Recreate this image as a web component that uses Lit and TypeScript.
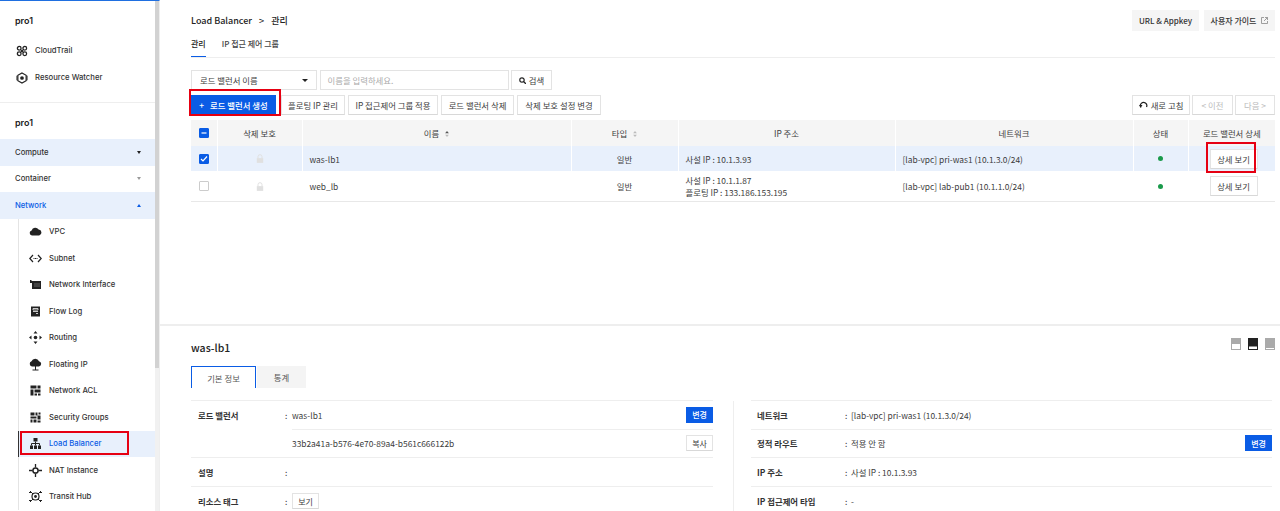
import { LitElement, css, html, svg } from 'lit';
import { customElement } from 'lit/decorators.js';

const ICONS: Record<string, unknown> = {
  trail: svg`<circle cx="3.5" cy="3.5" r="2" fill="none" stroke="#222" stroke-width="1.4"/><circle cx="9.5" cy="3.5" r="2" fill="none" stroke="#222" stroke-width="1.4"/><circle cx="3.5" cy="9.5" r="2" fill="none" stroke="#222" stroke-width="1.4"/><circle cx="9.5" cy="9.5" r="2" fill="none" stroke="#222" stroke-width="1.4"/><path d="M5 5l3 3M8 5l-3 3" stroke="#222" stroke-width="1.2"/>`,
  watcher: svg`<path d="M6.5 1l4.5 2.5v6L6.5 12 2 9.5v-6z" fill="none" stroke="#222" stroke-width="1.3"/><circle cx="6.5" cy="6.5" r="2" fill="#222"/><path d="M1 4v5M12 4v5" stroke="#222" stroke-width="1"/>`,
  cloud: svg`<path d="M3 10.5a2.6 2.6 0 0 1-.4-5.1A3.9 3.9 0 0 1 9.6 4.6a3 3 0 0 1 .6 5.9z" fill="#222"/>`,
  subnet: svg`<path d="M4 3L.8 6.500 4 10M9 3l3.200 3.500L9 10" fill="none" stroke="#222" stroke-width="1.200"/><path d="M4.500 6.500h4" stroke="#222" stroke-dasharray="1 .5"/>`,
  nic: svg`<path d="M1 2h1.5v1H12v8H3V5H1z" fill="#222"/><path d="M6 5v4M8 5v4M10 5v4" stroke="#777" stroke-width=".8"/>`,
  flow: svg`<path d="M2 1.5h9v10H2z" fill="#222"/><path d="M4 3.500h5v1.500H4zM4 6.500h5M7 8.500h2" stroke="#ddd" fill="none" stroke-width=".9"/>`,
  routing: svg`<circle cx="6.500" cy="6.500" r="1.800" fill="#222"/><path d="M6.500 0l2 2.500h-4zM6.500 13l2-2.500h-4zM0 6.500l2.500-2v4zM13 6.500l-2.500-2v4z" fill="#222"/>`,
  floating: svg`<path d="M3 8.500a2.700 2.700 0 0 1-.5-5.200A4 4 0 0 1 10 3.200a2.700 2.700 0 0 1 0 5.300z" fill="#222"/><path d="M6.500 8v4M3.500 12h6" stroke="#222" stroke-width="1"/>`,
  acl: svg`<path d="M1.500 1.500h6v3h-6zM8.500 1.500h3v3h-3zM1.500 5.500h3v6h-3zM5.500 5.500h6v3h-6zM5.500 9.500h2.500v2h-2.500zM9 9.500h2.500v2H9z" fill="#222"/>`,
  security: svg`<path d="M1.500 1.500h4v3h-4zM6.500 1.500h2v3h-2zM9.500 1.500h2v2h-2zM1.500 5.500h6v2h-6zM8.500 4.500h3v4h-3zM1.500 8.500h2v3h-2zM4.500 8.500h3v3h-3zM8.500 9.500h3v2h-3z" fill="#222"/>`,
  lb: svg`<path d="M4.500 1h4v3.500h-4zM1 8.500h3V12H1zM5 8.500h3V12H5zM9 8.500h3V12H9z" fill="#222"/><path d="M6.500 4.500v4M2.500 8.500V6.500h8v2" fill="none" stroke="#222"/>`,
  nat: svg`<circle cx="6.500" cy="6.500" r="2.600" fill="none" stroke="#222" stroke-width="1.500"/><path d="M0 6.500h3.500M9.500 6.500H13M6.500 0v3.500M6.500 9.500V13" stroke="#222" stroke-width="1.300"/>`,
  transit: svg`<circle cx="6.500" cy="6.500" r="3.500" fill="none" stroke="#222" stroke-width="1.200"/><circle cx="6.500" cy="6.500" r="1.400" fill="#222"/><path d="M1 1l3 3M12 1L9 4M1 12l3-3M12 12L9 9M0 2.500h2.500M13 2.500h-2.500M0 10.500h2.500M13 10.500h-2.500" stroke="#222" stroke-width="1"/>`,
};

const CATEGORIES = [
  { name: 'Compute', tint: true, caret: 'down' },
  { name: 'Container', caret: 'down-muted' },
  { name: 'Network', tint: true, open: true, caret: 'up' },
];

const NETWORK_ITEMS = [
  ['VPC', 'cloud'],
  ['Subnet', 'subnet'],
  ['Network Interface', 'nic'],
  ['Flow Log', 'flow'],
  ['Routing', 'routing'],
  ['Floating IP', 'floating'],
  ['Network ACL', 'acl'],
  ['Security Groups', 'security'],
  ['Load Balancer', 'lb'],
  ['NAT Instance', 'nat'],
  ['Transit Hub', 'transit'],
];

const icon = (name: string) => html`<svg class="nav-icon" viewBox="0 0 13 13">${ICONS[name]}</svg>`;

const lock = html`<svg class="lock" viewBox="0 0 10 11"><path d="M2.500 5V3.200a2.500 2.500 0 0 1 5 0V5" fill="none" stroke="#e0e0e0" stroke-width="1.200"/><path d="M1 5h8v6H1z" fill="#e0e0e0"/></svg>`;

const sort = (top: string) => html`<svg class="sort" viewBox="0 0 5 8"><path d="M2.500 0L5 3H0z" fill="${top}"/><path d="M2.500 8L5 5H0z" fill="#bbb"/></svg>`;

@customElement('app-root')
export class AppRoot extends LitElement {
  static styles = css`
    :host {
      display: block;
      height: 511px;
      overflow: hidden;
      font-family: 'Noto Sans CJK KR', 'Noto Sans', sans-serif;
      font-size: 8.400px;
      color: #333;
      background: #fff;
    }

    .app { display: flex; height: 511px; position: relative; overflow: hidden; }

    /* sidebar */
    .side {
      flex: 0 0 160px;
      box-sizing: border-box;
      height: 511px;
      border-top: 1px solid #1f6fe0;
      border-right: 1px solid #eee;
      position: relative;
      overflow: hidden;
      font-family: Inter, 'Noto Sans', sans-serif;
      font-size: 7.700px;
      color: #333;
    }
    .side-title { font-size: 9px; font-weight: 600; color: #222; padding-left: 15px; line-height: 14px; }
    .side-top { height: 102px; box-sizing: border-box; padding-top: 13px; border-bottom: 1px solid #eee; }
    .top-items { margin-top: 9px; }
    .top-item { display: flex; align-items: center; height: 27px; padding-left: 16px; font-weight: 500; }
    .top-item .nav-icon { width: 12px; height: 12px; margin-right: 7px; }
    .side-second { padding-top: 13px; }
    .cats { margin-top: 9px; }
    .cat {
      display: flex; align-items: center; justify-content: space-between;
      height: 26.500px; padding: 0 18px 0 15px; font-weight: 500;
    }
    .cat.tint { background: #e8f0fc; }
    .cat.open { color: #0a5ce5; }
    .caret { width: 0; height: 0; border-left: 2.500px solid transparent; border-right: 2.500px solid transparent; }
    .caret.down { border-top: 3px solid #222; }
    .caret.down-muted { border-top: 3px solid #999; }
    .caret.up { border-bottom: 3px solid #0a5ce5; }
    .sub { margin-left: 18px; border-left: 1px solid #e4e4e4; }
    .sub-item { display: flex; align-items: center; height: 26.500px; padding-left: 10px; font-weight: 500; }
    .sub-item .nav-icon { margin-right: 7px; }
    .sub-item.active { background: #e8f0fc; color: #0a5ce5; box-shadow: -1px 0 0 #333; }
    .nav-icon { width: 13px; height: 13px; flex: none; }
    .scroll { position: absolute; top: 0; left: 155px; width: 4px; height: 511px; background: #f1f1f1; }
    .thumb { height: 367px; background: rgba(190, 190, 190, .6); }

    /* main */
    .main { flex: 1; min-width: 0; display: flex; flex-direction: column; }
    .pane-top { height: 326px; box-sizing: border-box; padding: 10px 5px 0 31px; border-bottom: 2px solid #eee; flex: none; }
    .head { display: flex; justify-content: space-between; height: 21px; align-items: center; }
    .crumbs { font-size: 9px; font-weight: 500; color: #222; display: flex; gap: 7px; }
    .head-btns { display: flex; gap: 5px; }
    .head-btn {
      height: 21px; padding: 0 8px; display: flex; align-items: center; gap: 5px;
      background: #f5f5f5; font-size: 8px; font-weight: 500; color: #333;
    }
    .head-btn.url { width: 67px; padding: 0; justify-content: center; }
    .head-btn.guide { width: 71px; padding: 0; justify-content: center; }
    .tabs { display: flex; gap: 16px; height: 26px; border-bottom: 1px solid #eee; }
    .tab { font-size: 8px; font-weight: 500; line-height: 26px; height: 25px; color: #444; }
    .tab.on { border-bottom: 1px solid #0a5ce5; color: #222; }

    .search { display: flex; gap: 2.500px; margin-top: 12px; height: 20px; }
    .box {
      border: 1px solid #e3e3e3; box-sizing: border-box; background: #fff;
      display: flex; align-items: center; font-size: 8.400px; color: #3c3c3c;
    }
    .select { width: 126px; padding: 0 8px; justify-content: space-between; }
    .select i { border-left: 3px solid transparent; border-right: 3px solid transparent; border-top: 3px solid #222; }
    .input { width: 189px; padding: 0 7px; color: #aaa; }
    .search-btn { width: 41px; justify-content: center; gap: 3px; }

    .actions { display: flex; justify-content: space-between; margin-top: 5px; height: 20px; }
    .btn-row { display: flex; gap: 3px; }
    .btn-row.tight { gap: 2px; }
    .btn {
      height: 20px; box-sizing: border-box; border: 1px solid #e3e3e3; border-bottom-color: #d8d8d8;
      background: #fff; display: flex; align-items: center; justify-content: center;
      font-size: 8.400px; color: #3c3c3c; padding: 0;
    }
    .btn.primary {
      width: 85px; margin-right: 2px; background: #0a5ce5; border-color: #0a5ce5;
      color: #fff; font-weight: 500; gap: 6px;
    }
    .btn.floating { width: 64px; }
    .btn.apply { width: 90px; }
    .btn.remove { width: 73px; }
    .btn.protect { width: 84px; }
    .btn.refresh { width: 58px; gap: 3px; }
    .btn.prev { width: 41px; }
    .btn.next { width: 40px; }
    .btn.off { color: #bbb; }

    table { border-collapse: collapse; table-layout: fixed; width: 1084px; margin-top: 5px; font-size: 8.400px; color: #3c3c3c; }
    col:nth-child(1) { width: 26px; }
    col:nth-child(2) { width: 85px; }
    col:nth-child(3) { width: 269px; }
    col:nth-child(4) { width: 107px; }
    col:nth-child(5) { width: 217px; }
    col:nth-child(6) { width: 238px; }
    col:nth-child(7) { width: 55px; }
    col:nth-child(8) { width: 87px; }
    th { background: #f5f5f5; height: 26px; padding: 0; font-weight: 400; border-left: 1px solid #fff; text-align: center; }
    th:first-child { border-left: 0; }
    td { padding: 0; text-align: center; border-left: 1px solid #fff; height: 25px; }
    td:first-child { border-left: 0; }
    tr.sel td { background: #e8f0fc; }
    tr.last td { height: 30px; border-bottom: 1px solid #e8e8e8; }
    td.left { text-align: left; padding-left: 7px; line-height: 12px; }
    .check {
      width: 10px; height: 10px; box-sizing: border-box; margin: auto; border: 1px solid #ccc; border-radius: 1px;
      display: flex; align-items: center; justify-content: center;
    }
    .check.on { background: #0a5ce5; border-color: #0a5ce5; }
    .check svg { width: 8px; height: 8px; }
    .lock { width: 8px; height: 9px; display: block; margin: auto; }
    .sort { width: 4px; height: 6px; margin-left: 6px; }
    .dot { width: 5px; height: 5px; border-radius: 50%; background: #1a9a4b; display: block; margin: auto; }
    .view { width: 48px; margin-left: 21px; }

    /* detail pane */
    .pane-bottom { flex: 1; min-height: 0; padding: 14px 5px 0 31px; position: relative; overflow: hidden; }
    .title { font-size: 10.500px; font-weight: 500; color: #222; line-height: 16px; }
    .views { position: absolute; top: 12px; right: 5px; display: flex; gap: 7px; }
    .views svg { width: 10px; height: 12px; display: block; }
    .d-tabs { display: flex; gap: 1px; margin-top: 10px; height: 22px; }
    .d-tab { width: 49px; background: #f4f4f4; display: flex; align-items: center; justify-content: center; font-size: 8.400px; color: #555; }
    .d-tab.on { width: 65px; box-sizing: border-box; background: #fff; border: 1px solid #0a5ce5; border-bottom: 0; }
    .d-cols { display: flex; gap: 38px; margin-top: 12px; }
    .d-col { width: 522px; flex: none; border-top: 1px solid #eee; font-size: 8.400px; color: #3c3c3c; }
    .d-col.right { position: relative; width: 521px; }
    .d-col.right::before { content: ''; position: absolute; left: -18px; top: 0; height: 120px; border-left: 1px solid #eee; }
    .d-row {
      display: grid; grid-template-columns: 87px 7px 1fr auto; align-items: center;
      height: 28.600px; box-sizing: border-box; border-bottom: 1px solid #eee; padding-left: 7px;
    }
    .d-col.right .d-row { grid-template-columns: 88px 6px 1fr auto; padding-left: 6px; }
    .d-row.first { height: 27.600px; border-bottom: 0; }
    .d-row.end { border-bottom: 0; }
    .rule { margin-left: 101px; border-top: 1px solid #eee; }
    .label { font-weight: 700; color: #333; }
    .mini { height: 16px; width: 27px; font-size: 8px; }
    .mini.blue { background: #0a5ce5; border-color: #0a5ce5; color: #fff; font-weight: 500; }

    /* red annotations drawn over the screenshot */
    .mark { position: absolute; border: 2px solid #e60012; box-sizing: border-box; pointer-events: none; }
    .mark.create { left: 189px; top: 89px; width: 92px; height: 27px; }
    .mark.nav { left: 20px; top: 431px; width: 109px; height: 24px; }
    .mark.detail { left: 1206px; top: 142px; width: 50px; height: 31px; }
  `;

  private renderSidebar() {
    return html`
      <aside class="side">
        <div class="side-top">
          <div class="side-title">pro1</div>
          <div class="top-items">
            <div class="top-item">${icon('trail')}CloudTrail</div>
            <div class="top-item">${icon('watcher')}Resource Watcher</div>
          </div>
        </div>
        <div class="side-second">
          <div class="side-title">pro1</div>
          <div class="cats">
            ${CATEGORIES.map(
              (c) => html`<div class="cat ${c.tint ? 'tint' : ''} ${c.open ? 'open' : ''}">
                <span>${c.name}</span><i class="caret ${c.caret}"></i>
              </div>`,
            )}
          </div>
          <div class="sub">
            ${NETWORK_ITEMS.map(
              ([label, ic]) => html`<div class="sub-item ${label === 'Load Balancer' ? 'active' : ''}">${icon(ic)}${label}</div>`,
            )}
          </div>
        </div>
        <div class="scroll"><div class="thumb"></div></div>
      </aside>
    `;
  }

  private renderTable() {
    return html`
      <table>
        <colgroup><col /><col /><col /><col /><col /><col /><col /><col /></colgroup>
        <thead>
          <tr>
            <th>
              <span class="check on"><svg viewBox="0 0 8 8"><path d="M1.500 4h5" stroke="#fff" stroke-width="1.200" /></svg></span>
            </th>
            <th>삭제 보호</th>
            <th>이름${sort('#555')}</th>
            <th>타입${sort('#bbb')}</th>
            <th>IP 주소</th>
            <th>네트워크</th>
            <th>상태</th>
            <th>로드 밸런서 상세</th>
          </tr>
        </thead>
        <tbody>
          <tr class="sel">
            <td>
              <span class="check on"><svg viewBox="0 0 8 8"><path d="M1 4l2 2 4-4.500" fill="none" stroke="#fff" stroke-width="1.200" /></svg></span>
            </td>
            <td>${lock}</td>
            <td class="left">was-lb1</td>
            <td>일반</td>
            <td class="left">사설 IP : 10.1.3.93</td>
            <td class="left">[lab-vpc] pri-was1 (10.1.3.0/24)</td>
            <td><i class="dot"></i></td>
            <td><div class="btn view">상세 보기</div></td>
          </tr>
          <tr class="last">
            <td><span class="check"></span></td>
            <td>${lock}</td>
            <td class="left">web_lb</td>
            <td>일반</td>
            <td class="left">사설 IP : 10.1.1.87<br />플로팅 IP : 133.186.153.195</td>
            <td class="left">[lab-vpc] lab-pub1 (10.1.1.0/24)</td>
            <td><i class="dot"></i></td>
            <td><div class="btn view">상세 보기</div></td>
          </tr>
        </tbody>
      </table>
    `;
  }

  private renderDetail() {
    return html`
      <section class="pane-bottom">
        <div class="title">was-lb1</div>
        <div class="views">
          <svg viewBox="0 0 10 12"><path d="M0 0h10v12H0z" fill="#aaa" /><path d="M1 6h8v5H1z" fill="#fff" /></svg>
          <svg viewBox="0 0 10 12"><path d="M0 0h10v12H0z" fill="#222" /><path d="M1 8.500h8V11H1z" fill="#fff" /></svg>
          <svg viewBox="0 0 10 12"><path d="M0 0h10v12H0z" fill="#aaa" /><path d="M1 10h8v1H1z" fill="#fff" /></svg>
        </div>
        <div class="d-tabs">
          <div class="d-tab on">기본 정보</div>
          <div class="d-tab">통계</div>
        </div>
        <div class="d-cols">
          <div class="d-col">
            <div class="d-row first">
              <span class="label">로드 밸런서</span><span>:</span><span>was-lb1</span>
              <div class="btn mini blue">변경</div>
            </div>
            <div class="rule"></div>
            <div class="d-row">
              <span></span><span></span><span>33b2a41a-b576-4e70-89a4-b561c666122b</span>
              <div class="btn mini">복사</div>
            </div>
            <div class="d-row"><span class="label">설명</span><span>:</span><span></span></div>
            <div class="d-row end">
              <span class="label">리소스 태그</span><span>:</span>
              <span><div class="btn mini">보기</div></span>
            </div>
          </div>
          <div class="d-col right">
            <div class="d-row"><span class="label">네트워크</span><span>:</span><span>[lab-vpc] pri-was1 (10.1.3.0/24)</span></div>
            <div class="d-row">
              <span class="label">정적 라우트</span><span>:</span><span>적용 안 함</span>
              <div class="btn mini blue">변경</div>
            </div>
            <div class="d-row"><span class="label">IP 주소</span><span>:</span><span>사설 IP : 10.1.3.93</span></div>
            <div class="d-row end"><span class="label">IP 접근제어 타입</span><span>:</span><span>-</span></div>
          </div>
        </div>
      </section>
    `;
  }

  protected render() {
    return html`
      <div class="app">
        ${this.renderSidebar()}
        <main class="main">
          <section class="pane-top">
            <div class="head">
              <div class="crumbs"><span>Load Balancer</span><span>&gt;</span><span>관리</span></div>
              <div class="head-btns">
                <div class="head-btn url">URL &amp; Appkey</div>
                <div class="head-btn guide">
                  사용자 가이드
                  <svg width="7" height="7" viewBox="0 0 7 7"><path d="M3 .5H.5v6h6V4M4 .5h2.500V3M6.500.5L3 4" fill="none" stroke="#888" stroke-width=".8" /></svg>
                </div>
              </div>
            </div>
            <div class="tabs">
              <div class="tab on">관리</div>
              <div class="tab">IP 접근 제어 그룹</div>
            </div>
            <div class="search">
              <div class="box select">로드 밸런서 이름<i></i></div>
              <div class="box input">이름을 입력하세요.</div>
              <div class="box search-btn">
                <svg width="7" height="7" viewBox="0 0 7 7"><circle cx="3" cy="3" r="2.200" fill="none" stroke="#222" stroke-width="1.200" /><path d="M4.500 4.500L7 7" stroke="#222" stroke-width="1.300" /></svg>
                검색
              </div>
            </div>
            <div class="actions">
              <div class="btn-row">
                <div class="btn primary"><span>+</span>로드 밸런서 생성</div>
                <div class="btn floating">플로팅 IP 관리</div>
                <div class="btn apply">IP 접근제어 그룹 적용</div>
                <div class="btn remove">로드 밸런서 삭제</div>
                <div class="btn protect">삭제 보호 설정 변경</div>
              </div>
              <div class="btn-row tight">
                <div class="btn refresh">
                  <svg width="9" height="9" viewBox="0 0 9 9"><path d="M2 6.500A3.200 3.200 0 1 1 7.500 6" fill="none" stroke="#222" stroke-width="1.200" /><path d="M0 4h3.500L1.800 6.500z" fill="#222" /></svg>
                  새로 고침
                </div>
                <div class="btn off prev">&lt; 이전</div>
                <div class="btn off next">다음 &gt;</div>
              </div>
            </div>
            ${this.renderTable()}
          </section>
          ${this.renderDetail()}
        </main>
        <div class="mark create"></div>
        <div class="mark nav"></div>
        <div class="mark detail"></div>
      </div>
    `;
  }
}
